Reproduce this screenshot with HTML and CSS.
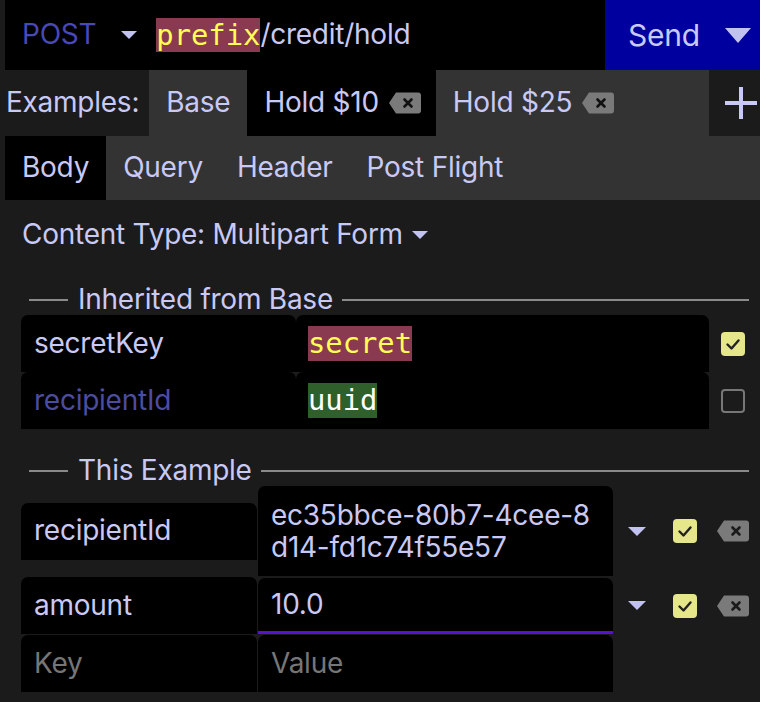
FILE: index.html
```html
<!DOCTYPE html>
<html lang="en">
<head>
<meta charset="utf-8">
<title>Request</title>
<link rel="stylesheet" href="styles.css">
</head>
<body>
<div class="app">
  <div class="urlbar">
    <div class="method"><span>POST</span><span class="caret caret-sm"></span></div>
    <div class="url"><span class="var">prefix</span>/credit/hold</div>
    <div class="send"><span>Send</span><span class="caret caret-lg"></span></div>
  </div>

  <div class="examples">
    <span class="ex-label">Examples:</span>
    <div class="tabs">
      <div class="tab">Base</div>
      <div class="tab active"><span>Hold $10</span>
        <svg class="del" width="32" height="22" viewBox="0 0 32 22"><path d="M0 11 L7 0.5 H29 A3 3 0 0 1 32 3.5 V18.5 A3 3 0 0 1 29 21.5 H7 Z" fill="#7a7a7a"/><path d="M15.5 7.5 L22.5 14.5 M22.5 7.5 L15.5 14.5" stroke="#111" stroke-width="2.6" stroke-linecap="round"/></svg>
      </div>
      <div class="tab"><span>Hold $25</span>
        <svg class="del" width="32" height="22" viewBox="0 0 32 22"><path d="M0 11 L7 0.5 H29 A3 3 0 0 1 32 3.5 V18.5 A3 3 0 0 1 29 21.5 H7 Z" fill="#7a7a7a"/><path d="M15.5 7.5 L22.5 14.5 M22.5 7.5 L15.5 14.5" stroke="#111" stroke-width="2.6" stroke-linecap="round"/></svg>
      </div>
    </div>
    <div class="add">
      <svg width="32" height="32" viewBox="0 0 32 32"><path d="M16 0 V32 M0 16 H32" stroke="#c9c9f6" stroke-width="4"/></svg>
    </div>
  </div>

  <div class="subtabs">
    <div class="subtab active">Body</div>
    <div class="subtab">Query</div>
    <div class="subtab">Header</div>
    <div class="subtab">Post Flight</div>
  </div>

  <div class="panel">
    <div class="ctype"><span>Content Type: Multipart Form</span><span class="caret caret-md"></span></div>

    <div class="legend"><span class="lline short"></span><span class="ltext">Inherited from Base</span><span class="lline grow"></span></div>
    <div class="kv">
      <div class="key wide">secretKey</div>
      <div class="val wide"><span class="var">secret</span></div>
      <span class="check on"><svg width="24" height="24" viewBox="0 0 24 24"><path d="M6.5 12.5 L10.5 16.5 L17.5 8.5" fill="none" stroke="#222" stroke-width="2.4" stroke-linecap="round" stroke-linejoin="round"/></svg></span>
    </div>
    <div class="kv">
      <div class="key wide dim">recipientId</div>
      <div class="val wide"><span class="var green">uuid</span></div>
      <span class="check off"></span>
    </div>

    <div class="legend second"><span class="lline short"></span><span class="ltext">This Example</span><span class="lline grow"></span></div>
    <div class="kv ex">
      <div class="key">recipientId</div>
      <div class="val tall"><span class="ln">ec35bbce-80b7-4cee-8</span><span class="ln">d14-fd1c74f55e57</span></div>
      <span class="caret caret-row"></span>
      <span class="check on mid"><svg width="24" height="24" viewBox="0 0 24 24"><path d="M6.5 12.5 L10.5 16.5 L17.5 8.5" fill="none" stroke="#222" stroke-width="2.4" stroke-linecap="round" stroke-linejoin="round"/></svg></span>
      <svg class="del row-del" width="32" height="22" viewBox="0 0 32 22"><path d="M0 11 L7 0.5 H29 A3 3 0 0 1 32 3.5 V18.5 A3 3 0 0 1 29 21.5 H7 Z" fill="#7a7a7a"/><path d="M15.5 7.5 L22.5 14.5 M22.5 7.5 L15.5 14.5" stroke="#1b1b1b" stroke-width="2.6" stroke-linecap="round"/></svg>
    </div>
    <div class="kv ex">
      <div class="key">amount</div>
      <div class="val focus">10.0</div>
      <span class="caret caret-row"></span>
      <span class="check on mid"><svg width="24" height="24" viewBox="0 0 24 24"><path d="M6.5 12.5 L10.5 16.5 L17.5 8.5" fill="none" stroke="#222" stroke-width="2.4" stroke-linecap="round" stroke-linejoin="round"/></svg></span>
      <svg class="del row-del" width="32" height="22" viewBox="0 0 32 22"><path d="M0 11 L7 0.5 H29 A3 3 0 0 1 32 3.5 V18.5 A3 3 0 0 1 29 21.5 H7 Z" fill="#7a7a7a"/><path d="M15.5 7.5 L22.5 14.5 M22.5 7.5 L15.5 14.5" stroke="#1b1b1b" stroke-width="2.6" stroke-linecap="round"/></svg>
    </div>
    <div class="kv ex last">
      <div class="key ph">Key</div>
      <div class="val ph">Value</div>
    </div>
  </div>
</div>
</body>
</html>
```

FILE: styles.css
```css
html, body {
  margin: 0;
  padding: 0;
}
body {
  background: #1b1b1b;
  color: #c9c9f6;
  font-family: Inter, "Noto Sans", sans-serif;
  font-size: 28px;
  letter-spacing: -0.25px;
  line-height: 1.2;
}
.app {
  padding-left: 5px;
  height: 702px;
  overflow: hidden;
}

/* carets */
.caret {
  display: inline-block;
  width: 0;
  height: 0;
  border-style: solid;
  border-color: #c2c2f0 transparent transparent transparent;
}
.caret-sm { border-width: 8px 8.5px 0 8.5px; }
.caret-lg { border-width: 15px 13px 0 13px; }
.caret-md { border-width: 8px 8px 0 8px; }
.caret-row { border-width: 9px 9px 0 9px; margin-left: 15px; flex: none; }

/* url bar */
.urlbar {
  display: flex;
  height: 70px;
  background: #000;
}
.method {
  display: flex;
  align-items: center;
  gap: 25px;
  padding-left: 17px;
  color: #4848b6;
}
.url {
  flex: 1;
  display: flex;
  align-items: center;
  margin-left: 19px;
}
.var {
  font-family: "DejaVu Sans Mono", "Liberation Mono", monospace;
  font-size: 28.8px;
  letter-spacing: 0;
  background: #8a3a50;
  color: #ffff55;
}
.var.green {
  background: #2f5f2a;
  color: #ffffff;
}
.send {
  width: 155px;
  box-sizing: border-box;
  background: #00009e;
  display: flex;
  align-items: center;
  gap: 25px;
  padding-left: 23px;
  font-size: 30px;
}

/* examples */
.examples {
  display: flex;
  height: 66px;
}
.ex-label {
  display: flex;
  align-items: center;
  padding: 0 10px 0 1px;
}
.tabs {
  flex: 1;
  display: flex;
  background: #333333;
}
.tab {
  display: flex;
  align-items: center;
  gap: 10px;
  padding: 0 15px 0 17px;
}
.tab:first-child {
  padding-right: 17px;
}
.tab.active {
  background: #000;
}
.del {
  display: block;
  flex: none;
}
.add {
  width: 51px;
  box-sizing: border-box;
  display: flex;
  align-items: center;
  padding-left: 16px;
}

/* sub tabs */
.subtabs {
  display: flex;
  height: 64px;
  background: #333333;
}
.subtab {
  display: flex;
  align-items: center;
  padding: 0 17px;
}
.subtab.active {
  background: #000;
}

/* panel */
.panel {
  padding: 18px 11px 0 16px;
}
.ctype {
  display: flex;
  align-items: center;
  gap: 9px;
  height: 34px;
  padding-left: 1px;
}
.legend {
  display: flex;
  align-items: center;
  height: 30px;
  margin-top: 33px;
  padding-left: 8px;
}
.legend.second {
  margin-top: 27px;
}
.lline {
  height: 2px;
  background: #8a8a8a;
}
.lline.short {
  width: 39px;
}
.lline.grow {
  flex: 1;
}
.ltext {
  padding: 0 9px 0 10px;
}

.kv {
  display: flex;
  align-items: center;
}
.kv.ex + .kv.ex {
  margin-top: 1px;
}
.kv.ex.last {
  margin-top: 0;
}
.key, .val {
  box-sizing: border-box;
  background: #000;
  border-radius: 7px 7px 0 0;
  height: 57px;
  display: flex;
  align-items: center;
  flex: none;
}
.key {
  width: 236px;
  padding: 0 13px;
}
.val {
  width: 355px;
  margin-left: 1px;
  padding: 0 13px;
}
.key.wide {
  width: 275px;
}
.val.wide {
  width: 413px;
  margin-left: 0;
  padding-left: 12px;
}
.dim {
  color: #4c4ca0;
}
.ph {
  color: #767676;
}
.val.tall {
  height: 90px;
  flex-direction: column;
  align-items: flex-start;
  justify-content: center;
  line-height: 32px;
}
.ln {
  display: block;
}
.val.focus {
  height: 56px;
  border-bottom: 3px solid #5512cf;
  padding-top: 1px;
}

.check {
  display: block;
  width: 24px;
  height: 24px;
  box-sizing: border-box;
  border-radius: 4px;
  margin-left: 12px;
  flex: none;
}
.check svg {
  display: block;
}
.check.on {
  background: #e6e68a;
}
.check.off {
  border: 2px solid #777;
}
.check.mid {
  margin-left: 27px;
}
.row-del {
  margin-left: 20px;
}
```
